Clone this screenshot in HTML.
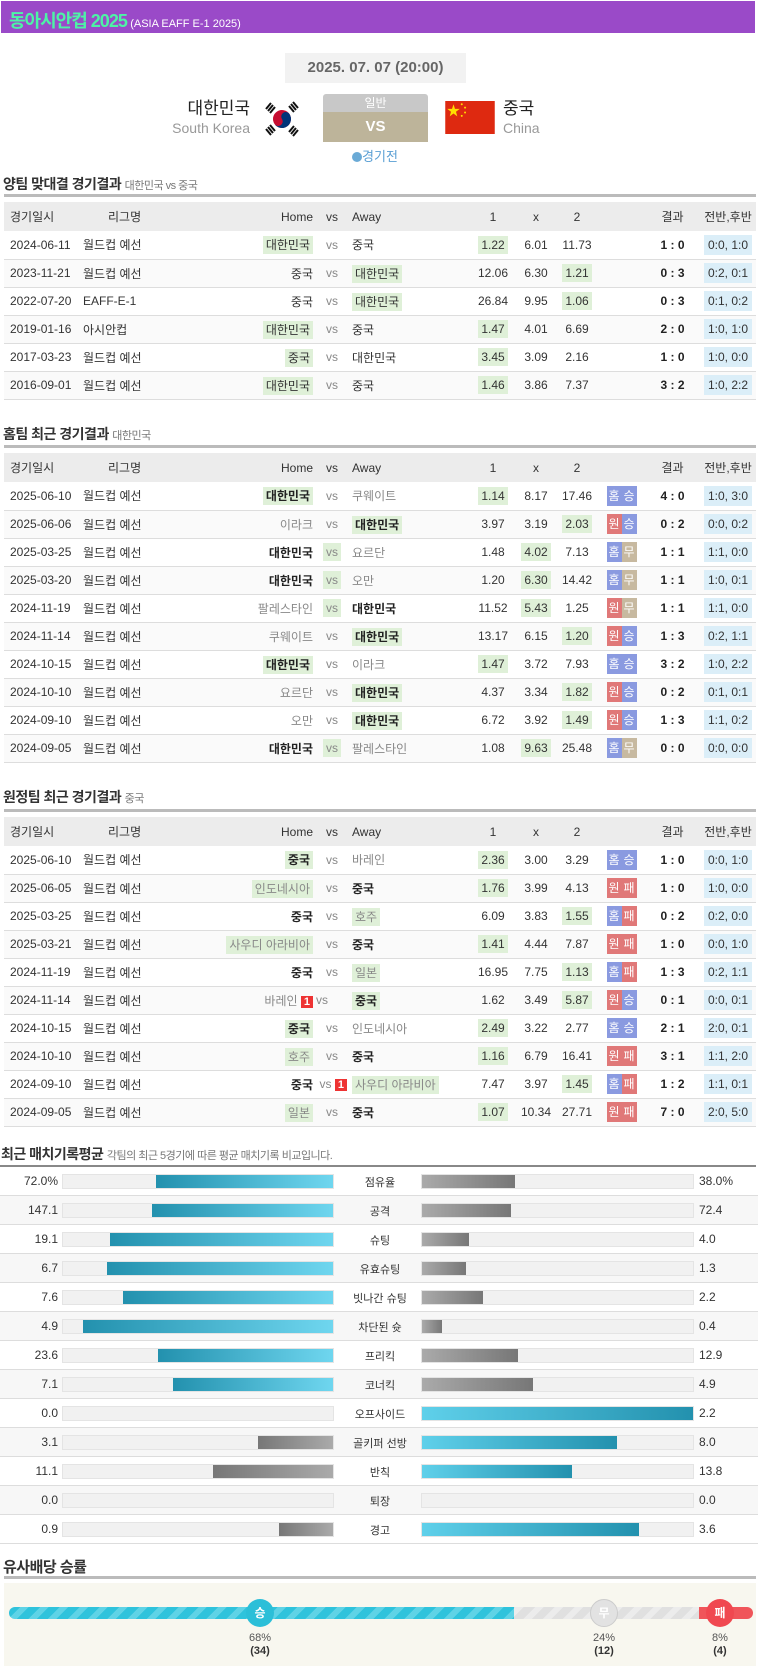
<!DOCTYPE html>
<html><head><meta charset="utf-8"><style>
*{margin:0;padding:0;box-sizing:border-box}
body{width:758px;height:1666px;overflow:hidden;background:#fff;font-family:"Liberation Sans","Noto Sans CJK KR",sans-serif;color:#333;font-size:12px;position:relative}
.hdr{position:absolute;left:1px;top:1px;width:754px;height:32px;background:#9a4ac8;padding:6px 8px;white-space:nowrap}
.hdr b{color:#4df3a6;font-size:18px;letter-spacing:-1px}
.hdr span{color:#fff;font-size:11px}
.abs{position:absolute}
.st{position:absolute;left:3px;font-size:14px;font-weight:bold;color:#333;letter-spacing:-0.5px}
.st small{font-size:11px;font-weight:normal;color:#777}
.ln{position:absolute;left:4px;width:752px;height:3px;background:#bbb}
table{position:absolute;left:4px;width:752px;border-collapse:collapse;table-layout:fixed}
td{height:28px;border-bottom:1px solid #ddd;white-space:nowrap;overflow:visible;font-size:12px}
tr.h td{background:#ececec;height:29px;border-bottom:none}
tr:nth-child(odd):not(.h) td{background:#fafafa}
.c1{padding-left:6px}.c2{padding-left:5px}.c3{text-align:right;padding-right:3px}.c4{text-align:center;color:#888}.c5{padding-left:4px}
.c6,.c7,.c8,.c9,.c10,.c11{text-align:center}
.hl{background:#dff0d8;padding:2px 3px}
.g{color:#888}.B{font-weight:bold;color:#222}
.sc{font-weight:bold;color:#222}
.ht{background:#dbeef8;padding:3px 4px}
.bd{display:inline-block;color:#fff;width:15px;height:20px;line-height:20px;font-size:12px;text-align:center}
.bl{background:#8a9ae0}.rd{background:#e07878}.tn{background:#c7b9a0}
.rc{background:#e33;color:#fff;padding:0 3px;font-size:11px;font-weight:bold}
.sr{position:absolute;left:0;width:758px;height:29px;border-bottom:1px solid #ddd}
.sr.e{background:#f7f7f7}
.sr .lv{position:absolute;right:700px;top:7px;font-size:12px;color:#333}
.sr .rv{position:absolute;left:699px;top:7px;font-size:12px;color:#333}
.sr .lb{position:absolute;left:340px;width:80px;text-align:center;top:7px;font-size:11px;color:#333}
.tr{position:absolute;top:7px;height:15px;background:#f1f1f1;border:1px solid #e4e4e4}
.tl{left:62px;width:272px}.trr{left:421px;width:273px}
.bar{position:absolute;top:0;height:13px}
.lb1{right:0;background:linear-gradient(90deg,#2391ae,#6fd6ef)}
.rb1{left:0;background:linear-gradient(90deg,#5fd0ea,#2391ae)}
.lg{right:0;background:linear-gradient(90deg,#777,#aaa)}
.rg{left:0;background:linear-gradient(90deg,#aaa,#777)}
</style></head><body>
<div class="hdr"><b>동아시안컵 2025</b> <span>(ASIA EAFF E-1 2025)</span></div>
<div class="abs" style="left:285px;top:53px;width:181px;height:30px;background:#f2f2f2;text-align:center;line-height:30px;font-size:15px;font-weight:bold;color:#666">2025. 07. 07 (20:00)</div>
<div class="abs" style="left:120px;top:94px;width:130px;text-align:right;font-size:17px;color:#222">대한민국</div>
<div class="abs" style="left:120px;top:120px;width:130px;text-align:right;font-size:14px;color:#999">South Korea</div>
<svg class="abs" style="left:262px;top:99px" width="40" height="40" viewBox="0 0 40 40">
<g transform="rotate(-33 20 20)"><circle cx="20" cy="20" r="9" fill="#c60c30"/><path d="M11 20a9 9 0 0 0 18 0a4.5 4.5 0 0 0-9 0a4.5 4.5 0 0 1-9 0z" fill="#003478"/></g>
<g stroke="#111" stroke-width="2"><path d="M4 10l5-6M6 12l5-6M8 14l5-6"/><path d="M27 33l5-6M29 35l5-6M31 37l5-6"/><path d="M27 7l5 6M29 5l5 6M31 3l5 6"/><path d="M4 30l5 6M6 28l5 6M8 26l5 6"/></g></svg>
<div class="abs" style="left:323px;top:94px;width:105px;height:18px;background:#c8c8c8;border-radius:3px 3px 0 0;text-align:center;color:#fff;font-size:12px;line-height:18px">일반</div>
<div class="abs" style="left:323px;top:112px;width:105px;height:30px;background:#bdb49a;text-align:center;color:#fff;font-size:15px;font-weight:bold;line-height:30px">VS</div>
<div class="abs" style="left:340px;top:146px;width:70px;text-align:center;font-size:13px;color:#5a9fd4"><span style="display:inline-block;width:10px;height:10px;border-radius:50%;background:#6aaad6;vertical-align:-1px"></span>경기전</div>
<svg class="abs" style="left:445px;top:101px" width="50" height="33" viewBox="0 0 30 20"><rect width="30" height="20" fill="#de2910"/><polygon points="5,2 5.9,4.8 8.8,4.8 6.5,6.5 7.3,9.3 5,7.6 2.7,9.3 3.5,6.5 1.2,4.8 4.1,4.8" fill="#ffde00"/><g fill="#ffde00"><circle cx="10" cy="2" r=".6"/><circle cx="12" cy="4" r=".6"/><circle cx="12" cy="7" r=".6"/><circle cx="10" cy="9" r=".6"/></g></svg>
<div class="abs" style="left:503px;top:94px;font-size:17px;color:#222">중국</div>
<div class="abs" style="left:503px;top:120px;font-size:14px;color:#999">China</div>

<div class="st" style="top:174px">양팀 맞대결 경기결과 <small>대한민국 vs 중국</small></div>
<div class="ln" style="top:194px"></div>
<table style="top:202px">
<colgroup><col style="width:74px"><col style="width:137px"><col style="width:101px"><col style="width:32px"><col style="width:122px"><col style="width:46px"><col style="width:40px"><col style="width:42px"><col style="width:47px"><col style="width:55px"><col style="width:56px"></colgroup>
<tr class="h"><td class="c1">경기일시</td><td class="c2" style="padding-left:30px">리그명</td><td class="c3">Home</td><td class="c4" style="color:#333">vs</td><td class="c5">Away</td><td class="c6">1</td><td class="c7">x</td><td class="c8">2</td><td></td><td class="c10">결과</td><td class="c11">전반,후반</td></tr>
<tr><td class="c1">2024-06-11</td><td class="c2">월드컵 예선</td><td class="c3"><span class="hl">대한민국</span></td><td class="c4">vs</td><td class="c5">중국</td><td class="c6"><span class="hl">1.22</span></td><td class="c7">6.01</td><td class="c8">11.73</td><td></td><td class="c10 sc">1 : 0</td><td class="c11"><span class="ht">0:0, 1:0</span></td></tr>
<tr><td class="c1">2023-11-21</td><td class="c2">월드컵 예선</td><td class="c3">중국</td><td class="c4">vs</td><td class="c5"><span class="hl">대한민국</span></td><td class="c6">12.06</td><td class="c7">6.30</td><td class="c8"><span class="hl">1.21</span></td><td></td><td class="c10 sc">0 : 3</td><td class="c11"><span class="ht">0:2, 0:1</span></td></tr>
<tr><td class="c1">2022-07-20</td><td class="c2">EAFF-E-1</td><td class="c3">중국</td><td class="c4">vs</td><td class="c5"><span class="hl">대한민국</span></td><td class="c6">26.84</td><td class="c7">9.95</td><td class="c8"><span class="hl">1.06</span></td><td></td><td class="c10 sc">0 : 3</td><td class="c11"><span class="ht">0:1, 0:2</span></td></tr>
<tr><td class="c1">2019-01-16</td><td class="c2">아시안컵</td><td class="c3"><span class="hl">대한민국</span></td><td class="c4">vs</td><td class="c5">중국</td><td class="c6"><span class="hl">1.47</span></td><td class="c7">4.01</td><td class="c8">6.69</td><td></td><td class="c10 sc">2 : 0</td><td class="c11"><span class="ht">1:0, 1:0</span></td></tr>
<tr><td class="c1">2017-03-23</td><td class="c2">월드컵 예선</td><td class="c3"><span class="hl">중국</span></td><td class="c4">vs</td><td class="c5">대한민국</td><td class="c6"><span class="hl">3.45</span></td><td class="c7">3.09</td><td class="c8">2.16</td><td></td><td class="c10 sc">1 : 0</td><td class="c11"><span class="ht">1:0, 0:0</span></td></tr>
<tr><td class="c1">2016-09-01</td><td class="c2">월드컵 예선</td><td class="c3"><span class="hl">대한민국</span></td><td class="c4">vs</td><td class="c5">중국</td><td class="c6"><span class="hl">1.46</span></td><td class="c7">3.86</td><td class="c8">7.37</td><td></td><td class="c10 sc">3 : 2</td><td class="c11"><span class="ht">1:0, 2:2</span></td></tr>
</table>

<div class="st" style="top:424px">홈팀 최근 경기결과 <small>대한민국</small></div>
<div class="ln" style="top:445px"></div>
<table style="top:453px">
<colgroup><col style="width:74px"><col style="width:137px"><col style="width:101px"><col style="width:32px"><col style="width:122px"><col style="width:46px"><col style="width:40px"><col style="width:42px"><col style="width:47px"><col style="width:55px"><col style="width:56px"></colgroup>
<tr class="h"><td class="c1">경기일시</td><td class="c2" style="padding-left:30px">리그명</td><td class="c3">Home</td><td class="c4" style="color:#333">vs</td><td class="c5">Away</td><td class="c6">1</td><td class="c7">x</td><td class="c8">2</td><td></td><td class="c10">결과</td><td class="c11">전반,후반</td></tr>
<tr><td class="c1">2025-06-10</td><td class="c2">월드컵 예선</td><td class="c3 B"><span class="hl">대한민국</span></td><td class="c4">vs</td><td class="c5 g">쿠웨이트</td><td class="c6"><span class="hl">1.14</span></td><td class="c7">8.17</td><td class="c8">17.46</td><td class="c9"><span class="bd bl">홈</span><span class="bd bl">승</span></td><td class="c10 sc">4 : 0</td><td class="c11"><span class="ht">1:0, 3:0</span></td></tr>
<tr><td class="c1">2025-06-06</td><td class="c2">월드컵 예선</td><td class="c3 g">이라크</td><td class="c4">vs</td><td class="c5 B"><span class="hl">대한민국</span></td><td class="c6">3.97</td><td class="c7">3.19</td><td class="c8"><span class="hl">2.03</span></td><td class="c9"><span class="bd rd">원</span><span class="bd bl">승</span></td><td class="c10 sc">0 : 2</td><td class="c11"><span class="ht">0:0, 0:2</span></td></tr>
<tr><td class="c1">2025-03-25</td><td class="c2">월드컵 예선</td><td class="c3 B">대한민국</td><td class="c4"><span class="hl">vs</span></td><td class="c5 g">요르단</td><td class="c6">1.48</td><td class="c7"><span class="hl">4.02</span></td><td class="c8">7.13</td><td class="c9"><span class="bd bl">홈</span><span class="bd tn">무</span></td><td class="c10 sc">1 : 1</td><td class="c11"><span class="ht">1:1, 0:0</span></td></tr>
<tr><td class="c1">2025-03-20</td><td class="c2">월드컵 예선</td><td class="c3 B">대한민국</td><td class="c4"><span class="hl">vs</span></td><td class="c5 g">오만</td><td class="c6">1.20</td><td class="c7"><span class="hl">6.30</span></td><td class="c8">14.42</td><td class="c9"><span class="bd bl">홈</span><span class="bd tn">무</span></td><td class="c10 sc">1 : 1</td><td class="c11"><span class="ht">1:0, 0:1</span></td></tr>
<tr><td class="c1">2024-11-19</td><td class="c2">월드컵 예선</td><td class="c3 g">팔레스타인</td><td class="c4"><span class="hl">vs</span></td><td class="c5 B">대한민국</td><td class="c6">11.52</td><td class="c7"><span class="hl">5.43</span></td><td class="c8">1.25</td><td class="c9"><span class="bd rd">원</span><span class="bd tn">무</span></td><td class="c10 sc">1 : 1</td><td class="c11"><span class="ht">1:1, 0:0</span></td></tr>
<tr><td class="c1">2024-11-14</td><td class="c2">월드컵 예선</td><td class="c3 g">쿠웨이트</td><td class="c4">vs</td><td class="c5 B"><span class="hl">대한민국</span></td><td class="c6">13.17</td><td class="c7">6.15</td><td class="c8"><span class="hl">1.20</span></td><td class="c9"><span class="bd rd">원</span><span class="bd bl">승</span></td><td class="c10 sc">1 : 3</td><td class="c11"><span class="ht">0:2, 1:1</span></td></tr>
<tr><td class="c1">2024-10-15</td><td class="c2">월드컵 예선</td><td class="c3 B"><span class="hl">대한민국</span></td><td class="c4">vs</td><td class="c5 g">이라크</td><td class="c6"><span class="hl">1.47</span></td><td class="c7">3.72</td><td class="c8">7.93</td><td class="c9"><span class="bd bl">홈</span><span class="bd bl">승</span></td><td class="c10 sc">3 : 2</td><td class="c11"><span class="ht">1:0, 2:2</span></td></tr>
<tr><td class="c1">2024-10-10</td><td class="c2">월드컵 예선</td><td class="c3 g">요르단</td><td class="c4">vs</td><td class="c5 B"><span class="hl">대한민국</span></td><td class="c6">4.37</td><td class="c7">3.34</td><td class="c8"><span class="hl">1.82</span></td><td class="c9"><span class="bd rd">원</span><span class="bd bl">승</span></td><td class="c10 sc">0 : 2</td><td class="c11"><span class="ht">0:1, 0:1</span></td></tr>
<tr><td class="c1">2024-09-10</td><td class="c2">월드컵 예선</td><td class="c3 g">오만</td><td class="c4">vs</td><td class="c5 B"><span class="hl">대한민국</span></td><td class="c6">6.72</td><td class="c7">3.92</td><td class="c8"><span class="hl">1.49</span></td><td class="c9"><span class="bd rd">원</span><span class="bd bl">승</span></td><td class="c10 sc">1 : 3</td><td class="c11"><span class="ht">1:1, 0:2</span></td></tr>
<tr><td class="c1">2024-09-05</td><td class="c2">월드컵 예선</td><td class="c3 B">대한민국</td><td class="c4"><span class="hl">vs</span></td><td class="c5 g">팔레스타인</td><td class="c6">1.08</td><td class="c7"><span class="hl">9.63</span></td><td class="c8">25.48</td><td class="c9"><span class="bd bl">홈</span><span class="bd tn">무</span></td><td class="c10 sc">0 : 0</td><td class="c11"><span class="ht">0:0, 0:0</span></td></tr>
</table>

<div class="st" style="top:787px">원정팀 최근 경기결과 <small>중국</small></div>
<div class="ln" style="top:809px"></div>
<table style="top:817px">
<colgroup><col style="width:74px"><col style="width:137px"><col style="width:101px"><col style="width:32px"><col style="width:122px"><col style="width:46px"><col style="width:40px"><col style="width:42px"><col style="width:47px"><col style="width:55px"><col style="width:56px"></colgroup>
<tr class="h"><td class="c1">경기일시</td><td class="c2" style="padding-left:30px">리그명</td><td class="c3">Home</td><td class="c4" style="color:#333">vs</td><td class="c5">Away</td><td class="c6">1</td><td class="c7">x</td><td class="c8">2</td><td></td><td class="c10">결과</td><td class="c11">전반,후반</td></tr>
<tr><td class="c1">2025-06-10</td><td class="c2">월드컵 예선</td><td class="c3 B"><span class="hl">중국</span></td><td class="c4">vs</td><td class="c5 g">바레인</td><td class="c6"><span class="hl">2.36</span></td><td class="c7">3.00</td><td class="c8">3.29</td><td class="c9"><span class="bd bl">홈</span><span class="bd bl">승</span></td><td class="c10 sc">1 : 0</td><td class="c11"><span class="ht">0:0, 1:0</span></td></tr>
<tr><td class="c1">2025-06-05</td><td class="c2">월드컵 예선</td><td class="c3 g"><span class="hl">인도네시아</span></td><td class="c4">vs</td><td class="c5 B">중국</td><td class="c6"><span class="hl">1.76</span></td><td class="c7">3.99</td><td class="c8">4.13</td><td class="c9"><span class="bd rd">원</span><span class="bd rd">패</span></td><td class="c10 sc">1 : 0</td><td class="c11"><span class="ht">1:0, 0:0</span></td></tr>
<tr><td class="c1">2025-03-25</td><td class="c2">월드컵 예선</td><td class="c3 B">중국</td><td class="c4">vs</td><td class="c5 g"><span class="hl">호주</span></td><td class="c6">6.09</td><td class="c7">3.83</td><td class="c8"><span class="hl">1.55</span></td><td class="c9"><span class="bd bl">홈</span><span class="bd rd">패</span></td><td class="c10 sc">0 : 2</td><td class="c11"><span class="ht">0:2, 0:0</span></td></tr>
<tr><td class="c1">2025-03-21</td><td class="c2">월드컵 예선</td><td class="c3 g"><span class="hl">사우디 아라비아</span></td><td class="c4">vs</td><td class="c5 B">중국</td><td class="c6"><span class="hl">1.41</span></td><td class="c7">4.44</td><td class="c8">7.87</td><td class="c9"><span class="bd rd">원</span><span class="bd rd">패</span></td><td class="c10 sc">1 : 0</td><td class="c11"><span class="ht">0:0, 1:0</span></td></tr>
<tr><td class="c1">2024-11-19</td><td class="c2">월드컵 예선</td><td class="c3 B">중국</td><td class="c4">vs</td><td class="c5 g"><span class="hl">일본</span></td><td class="c6">16.95</td><td class="c7">7.75</td><td class="c8"><span class="hl">1.13</span></td><td class="c9"><span class="bd bl">홈</span><span class="bd rd">패</span></td><td class="c10 sc">1 : 3</td><td class="c11"><span class="ht">0:2, 1:1</span></td></tr>
<tr><td class="c1">2024-11-14</td><td class="c2">월드컵 예선</td><td class="c3 g">바레인 <span class="rc">1</span></td><td class="c4" style="text-align:left">vs</td><td class="c5 B"><span class="hl">중국</span></td><td class="c6">1.62</td><td class="c7">3.49</td><td class="c8"><span class="hl">5.87</span></td><td class="c9"><span class="bd rd">원</span><span class="bd bl">승</span></td><td class="c10 sc">0 : 1</td><td class="c11"><span class="ht">0:0, 0:1</span></td></tr>
<tr><td class="c1">2024-10-15</td><td class="c2">월드컵 예선</td><td class="c3 B"><span class="hl">중국</span></td><td class="c4">vs</td><td class="c5 g">인도네시아</td><td class="c6"><span class="hl">2.49</span></td><td class="c7">3.22</td><td class="c8">2.77</td><td class="c9"><span class="bd bl">홈</span><span class="bd bl">승</span></td><td class="c10 sc">2 : 1</td><td class="c11"><span class="ht">2:0, 0:1</span></td></tr>
<tr><td class="c1">2024-10-10</td><td class="c2">월드컵 예선</td><td class="c3 g"><span class="hl">호주</span></td><td class="c4">vs</td><td class="c5 B">중국</td><td class="c6"><span class="hl">1.16</span></td><td class="c7">6.79</td><td class="c8">16.41</td><td class="c9"><span class="bd rd">원</span><span class="bd rd">패</span></td><td class="c10 sc">3 : 1</td><td class="c11"><span class="ht">1:1, 2:0</span></td></tr>
<tr><td class="c1">2024-09-10</td><td class="c2">월드컵 예선</td><td class="c3 B">중국</td><td class="c4" style="text-align:right;padding-right:1px">vs <span class="rc">1</span></td><td class="c5 g"><span class="hl">사우디 아라비아</span></td><td class="c6">7.47</td><td class="c7">3.97</td><td class="c8"><span class="hl">1.45</span></td><td class="c9"><span class="bd bl">홈</span><span class="bd rd">패</span></td><td class="c10 sc">1 : 2</td><td class="c11"><span class="ht">1:1, 0:1</span></td></tr>
<tr><td class="c1">2024-09-05</td><td class="c2">월드컵 예선</td><td class="c3 g"><span class="hl">일본</span></td><td class="c4">vs</td><td class="c5 B">중국</td><td class="c6"><span class="hl">1.07</span></td><td class="c7">10.34</td><td class="c8">27.71</td><td class="c9"><span class="bd rd">원</span><span class="bd rd">패</span></td><td class="c10 sc">7 : 0</td><td class="c11"><span class="ht">2:0, 5:0</span></td></tr>
</table>

<div class="st" style="top:1144px;left:1px">최근 매치기록평균 <small>각팀의 최근 5경기에 따른 평균 매치기록 비교입니다.</small></div>
<div class="abs" style="left:0;top:1165px;width:756px;height:2px;background:#888"></div>

<div class="sr" style="top:1167px"><span class="lv">72.0%</span><div class="tr tl"><div class="bar lb1" style="width:65.5%"></div></div><span class="lb">점유율</span><div class="tr trr"><div class="bar rg" style="width:34.5%"></div></div><span class="rv">38.0%</span></div>
<div class="sr e" style="top:1196px"><span class="lv">147.1</span><div class="tr tl"><div class="bar lb1" style="width:67%"></div></div><span class="lb">공격</span><div class="tr trr"><div class="bar rg" style="width:33%"></div></div><span class="rv">72.4</span></div>
<div class="sr" style="top:1225px"><span class="lv">19.1</span><div class="tr tl"><div class="bar lb1" style="width:82.7%"></div></div><span class="lb">슈팅</span><div class="tr trr"><div class="bar rg" style="width:17.3%"></div></div><span class="rv">4.0</span></div>
<div class="sr e" style="top:1254px"><span class="lv">6.7</span><div class="tr tl"><div class="bar lb1" style="width:83.7%"></div></div><span class="lb">유효슈팅</span><div class="tr trr"><div class="bar rg" style="width:16.3%"></div></div><span class="rv">1.3</span></div>
<div class="sr" style="top:1283px"><span class="lv">7.6</span><div class="tr tl"><div class="bar lb1" style="width:77.6%"></div></div><span class="lb">빗나간 슈팅</span><div class="tr trr"><div class="bar rg" style="width:22.4%"></div></div><span class="rv">2.2</span></div>
<div class="sr e" style="top:1312px"><span class="lv">4.9</span><div class="tr tl"><div class="bar lb1" style="width:92.5%"></div></div><span class="lb">차단된 슛</span><div class="tr trr"><div class="bar rg" style="width:7.5%"></div></div><span class="rv">0.4</span></div>
<div class="sr" style="top:1341px"><span class="lv">23.6</span><div class="tr tl"><div class="bar lb1" style="width:64.7%"></div></div><span class="lb">프리킥</span><div class="tr trr"><div class="bar rg" style="width:35.3%"></div></div><span class="rv">12.9</span></div>
<div class="sr e" style="top:1370px"><span class="lv">7.1</span><div class="tr tl"><div class="bar lb1" style="width:59.2%"></div></div><span class="lb">코너킥</span><div class="tr trr"><div class="bar rg" style="width:40.8%"></div></div><span class="rv">4.9</span></div>
<div class="sr" style="top:1399px"><span class="lv">0.0</span><div class="tr tl"></div><span class="lb">오프사이드</span><div class="tr trr"><div class="bar rb1" style="width:100%"></div></div><span class="rv">2.2</span></div>
<div class="sr e" style="top:1428px"><span class="lv">3.1</span><div class="tr tl"><div class="bar lg" style="width:27.9%"></div></div><span class="lb">골키퍼 선방</span><div class="tr trr"><div class="bar rb1" style="width:72.1%"></div></div><span class="rv">8.0</span></div>
<div class="sr" style="top:1457px"><span class="lv">11.1</span><div class="tr tl"><div class="bar lg" style="width:44.6%"></div></div><span class="lb">반칙</span><div class="tr trr"><div class="bar rb1" style="width:55.4%"></div></div><span class="rv">13.8</span></div>
<div class="sr e" style="top:1486px"><span class="lv">0.0</span><div class="tr tl"></div><span class="lb">퇴장</span><div class="tr trr"></div><span class="rv">0.0</span></div>
<div class="sr" style="top:1515px"><span class="lv">0.9</span><div class="tr tl"><div class="bar lg" style="width:20%"></div></div><span class="lb">경고</span><div class="tr trr"><div class="bar rb1" style="width:80%"></div></div><span class="rv">3.6</span></div>

<div class="st" style="top:1556px;left:3px;font-size:15px">유사배당 승률</div>
<div class="ln" style="top:1576px"></div>
<div class="abs" style="left:4px;top:1583px;width:752px;height:83px;background:#f8f7ef"></div>
<div class="abs" style="left:9px;top:1607px;width:744px;height:12px;border-radius:6px;overflow:hidden;background:repeating-linear-gradient(135deg,#e0e0e0 0 8px,#ececec 8px 14px)">
<div class="abs" style="left:0;top:0;width:505px;height:12px;background:repeating-linear-gradient(135deg,#2fc3dc 0 8px,#5fd3e6 8px 14px)"></div>
<div class="abs" style="left:690px;top:0;width:54px;height:12px;background:#f0555a"></div></div>
<div class="abs" style="left:246px;top:1599px;width:28px;height:28px;border-radius:50%;background:#2bbfd8;color:#fff;font-weight:bold;text-align:center;line-height:28px;font-size:12px">승</div>
<div class="abs" style="left:590px;top:1599px;width:28px;height:28px;border-radius:50%;background:#e2e2e2;border:1px solid #ccc;color:#fff;font-weight:bold;text-align:center;line-height:26px;font-size:12px">무</div>
<div class="abs" style="left:706px;top:1599px;width:28px;height:28px;border-radius:50%;background:#f04850;color:#fff;font-weight:bold;text-align:center;line-height:28px;font-size:12px">패</div>
<div class="abs" style="left:230px;top:1632px;width:60px;text-align:center;font-size:11px;color:#555;line-height:13px">68%<br><b style="color:#333">(34)</b></div>
<div class="abs" style="left:574px;top:1632px;width:60px;text-align:center;font-size:11px;color:#555;line-height:13px">24%<br><b style="color:#333">(12)</b></div>
<div class="abs" style="left:690px;top:1632px;width:60px;text-align:center;font-size:11px;color:#555;line-height:13px">8%<br><b style="color:#333">(4)</b></div>
</body></html>
